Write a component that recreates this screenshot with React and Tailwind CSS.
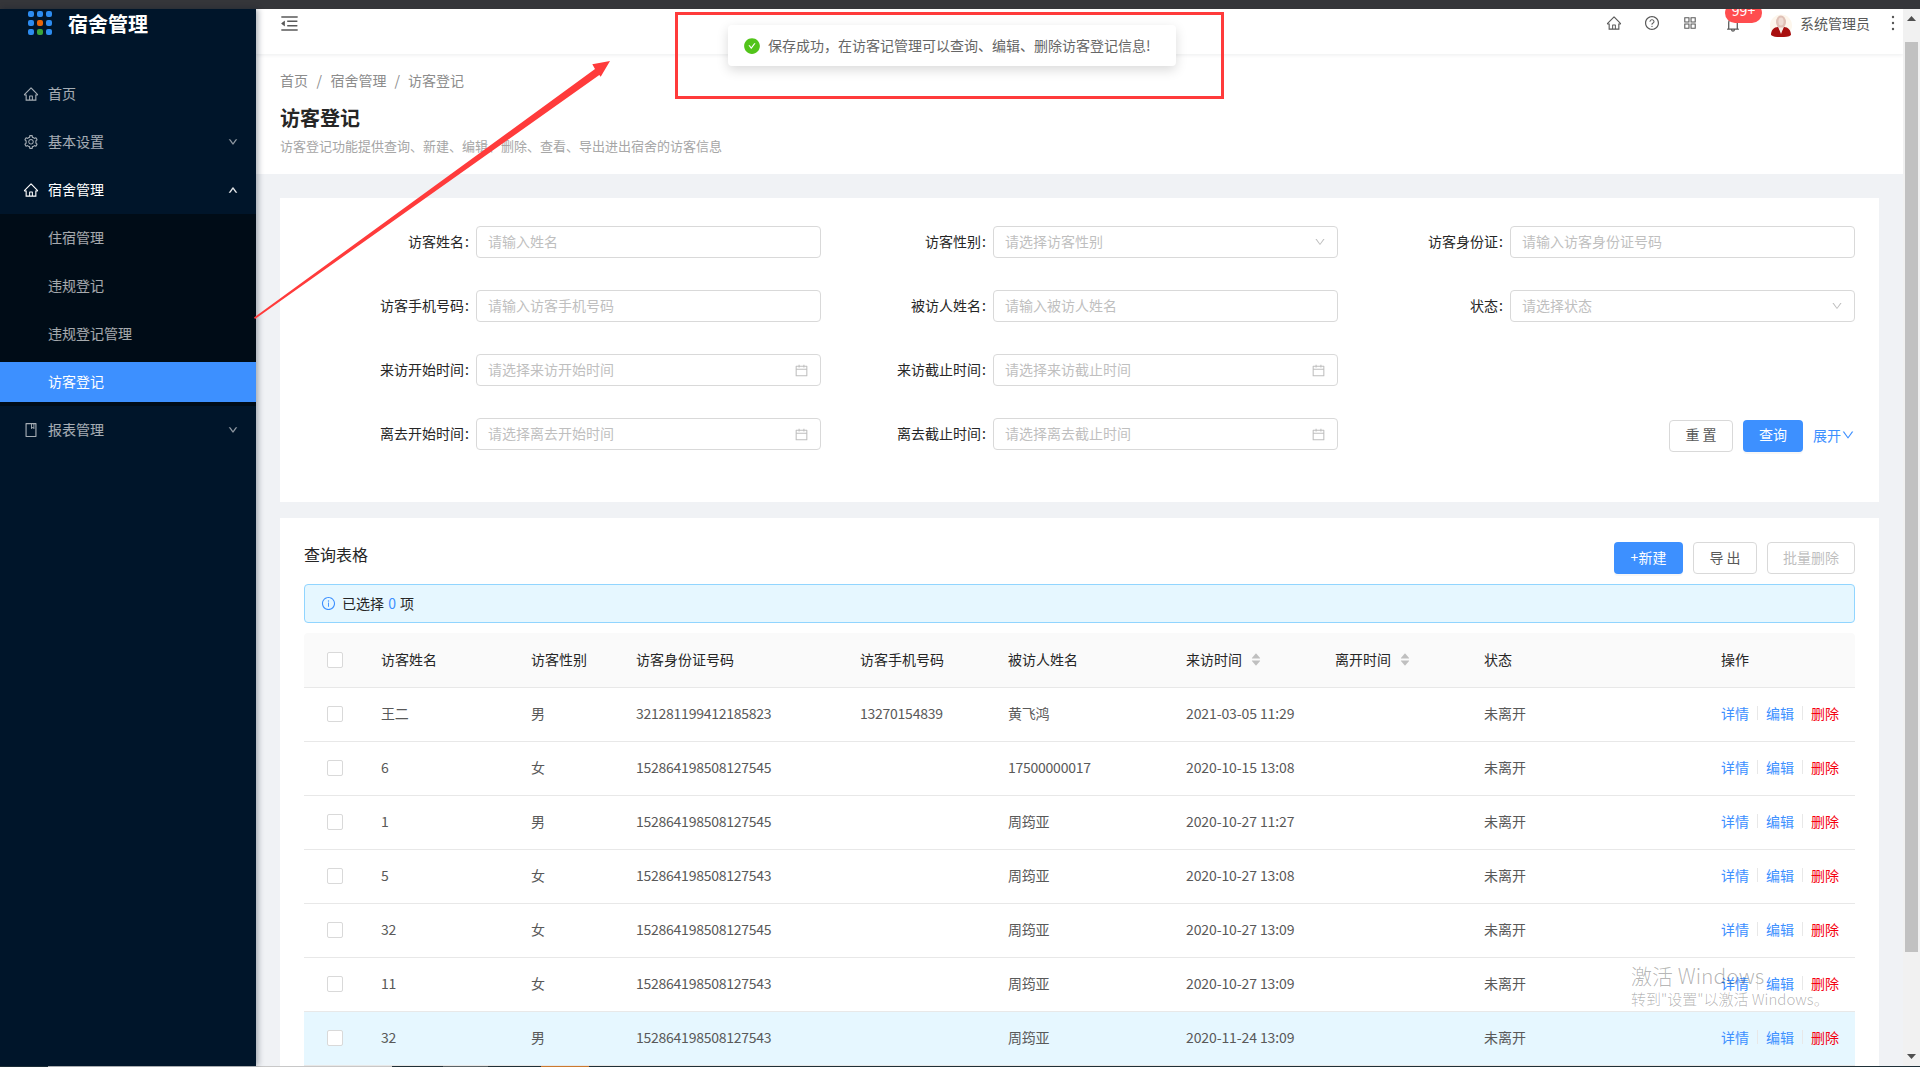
import React from 'react';
import {
  AiOutlineHome,
  AiOutlineSetting,
  AiOutlineBook,
  AiOutlineDown,
  AiOutlineUp,
  AiOutlineMenuFold,
  AiOutlineQuestionCircle,
  AiOutlineAppstore,
  AiOutlineBell,
  AiOutlineMore,
  AiOutlineCalendar,
  AiOutlineInfoCircle,
  AiFillCheckCircle,
  AiFillCaretUp,
  AiFillCaretDown,
} from 'react-icons/ai';

const rows = [
  { name: '王二', sex: '男', id: '321281199412185823', phone: '13270154839', host: '黄飞鸿', time: '2021-03-05 11:29' },
  { name: '6', sex: '女', id: '152864198508127545', phone: '', host: '17500000017', time: '2020-10-15 13:08' },
  { name: '1', sex: '男', id: '152864198508127545', phone: '', host: '周筠亚', time: '2020-10-27 11:27' },
  { name: '5', sex: '女', id: '152864198508127543', phone: '', host: '周筠亚', time: '2020-10-27 13:08' },
  { name: '32', sex: '女', id: '152864198508127545', phone: '', host: '周筠亚', time: '2020-10-27 13:09' },
  { name: '11', sex: '女', id: '152864198508127543', phone: '', host: '周筠亚', time: '2020-10-27 13:09' },
  { name: '32', sex: '男', id: '152864198508127543', phone: '', host: '周筠亚', time: '2020-11-24 13:09', active: true },
];

const NavItem = ({ icon: Icon, label, arrow, open, className = 'mb-2' }) => (
  <div className={`flex h-10 items-center pl-6 pr-[18px] text-sm ${open ? 'text-white' : 'text-white/65'} ${className}`}>
    <Icon size={16} className="mr-[9px] -ml-px" />
    <span className="flex-1 pb-[2px]">{label}</span>
    {arrow && (open
      ? <AiOutlineUp size={10} className="stroke-[60px] stroke-white" />
      : <AiOutlineDown size={10} className="stroke-[60px] stroke-white/50 text-white/50" />)}
  </div>
);

const SubItem = ({ label, active }) => (
  <div className={`flex h-10 items-center pb-[2px] pl-12 text-sm ${active ? 'bg-[#3d90ff] text-white' : 'text-white/65'}`}>
    {label}
  </div>
);

const Sidebar = () => (
  <aside className="z-10 flex w-64 shrink-0 flex-col bg-[#00152a] shadow-[2px_0_6px_rgba(0,21,41,0.35)]">
    <div className="flex h-[65px] items-start pl-7">
      <div className="mt-[2px] grid grid-cols-3 gap-[3px]">
        {['bg-[#2d8cf0]', 'bg-[#2d8cf0]', 'bg-[#2d8cf0]', 'bg-[#2d8cf0]', 'bg-[#e8650a]', 'bg-[#2d8cf0]', 'bg-[#2d8cf0]', 'bg-[#3aa53a]', 'bg-[#2d8cf0]'].map((c, i) => (
          <span key={i} className={`h-[6px] w-[6px] rounded-[2px] ${c}`} />
        ))}
      </div>
      <h1 className="ml-[16px] mt-px text-[20px] leading-7 font-bold text-white">宿舍管理</h1>
    </div>
    <NavItem icon={AiOutlineHome} label="首页" />
    <NavItem icon={AiOutlineSetting} label="基本设置" arrow />
    <NavItem icon={AiOutlineHome} label="宿舍管理" arrow open className="mb-1" />
    <div className="mb-1 flex flex-col gap-2 bg-[#000c17] py-1">
      <SubItem label="住宿管理" />
      <SubItem label="违规登记" />
      <SubItem label="违规登记管理" />
      <SubItem label="访客登记" active />
    </div>
    <NavItem icon={AiOutlineBook} label="报表管理" arrow />
  </aside>
);

const Avatar = () => (
  <svg width="22" height="23" viewBox="0 0 22 23">
    <circle cx="11" cy="11.5" r="11" fill="#fdf6ec" />
    <ellipse cx="11" cy="8" rx="5" ry="6.5" fill="#dfc0b6" />
    <ellipse cx="11" cy="7.5" rx="2.6" ry="4" fill="#efdcd4" />
    <path d="M1 21c0-5 3-8 7-8l3 5 3-5c4 0 7 3 7 8-2 2-6 2-10 2s-8 0-10-2z" fill="#a80f0f" />
    <path d="M8.5 13.5h5L11 20z" fill="#f7ece6" />
  </svg>
);

const Header = () => (
  <header className="relative z-[1] h-[45px] shrink-0 overflow-hidden bg-white shadow-[0_1px_4px_rgba(0,21,41,0.08)]">
    <div className="flex h-[28px] items-center pl-6 text-[#595959]">
      <AiOutlineMenuFold size={21} className="-ml-px" />
      <div className="ml-auto flex items-center">
        <AiOutlineHome size={16} />
        <AiOutlineQuestionCircle size={16} className="ml-[22px]" />
        <AiOutlineAppstore size={16} className="ml-[22px]" />
        <span className="relative ml-[26px] mt-[2px]">
          <AiOutlineBell size={18} />
          <span className="absolute -top-[12px] left-[1px] flex h-[20px] w-[37px] items-start justify-center rounded-full bg-[#ff4d4f] text-[14px] leading-[14px] text-white">99+</span>
        </span>
        <span className="ml-[28px] mt-[5px]"><Avatar /></span>
        <span className="ml-[8px] text-sm leading-[22px]">系统管理员</span>
        <AiOutlineMore size={22} className="ml-[12px] -mr-px" />
      </div>
    </div>
  </header>
);

const PageHeader = () => (
  <div className="h-[120px] shrink-0 bg-white pl-6 pt-4">
    <div className="flex -translate-y-px text-sm leading-[22px] text-[#8c8c8c]">
      <span>首页</span>
      <span className="mx-[8.5px]">/</span>
      <span>宿舍管理</span>
      <span className="mx-2">/</span>
      <span>访客登记</span>
    </div>
    <h2 className="mt-3 text-[20px] leading-7 font-bold text-[#262626]">访客登记</h2>
    <p className="mt-1 -translate-y-px text-[13px] leading-[22px] text-[#a6a6a6]">访客登记功能提供查询、新建、编辑、删除、查看、导出进出宿舍的访客信息</p>
  </div>
);

const Field = ({ label, placeholder, type }) => (
  <div className="flex h-8">
    <label className="flex h-8 w-[172px] shrink-0 items-center justify-end pb-[2px] pr-[7px] text-sm text-[#262626]">
      {label}<span className="ml-[1px]">:</span>
    </label>
    <div className="flex h-8 w-[345px] items-center rounded-[4px] border border-[#d9d9d9] bg-white pl-[11px] pr-[11px] text-sm text-[#bfbfbf]">
      <span className="flex-1 pb-[2px]">{placeholder}</span>
      {type === 'select' && <AiOutlineDown size={12} />}
      {type === 'date' && <AiOutlineCalendar size={15} />}
    </div>
  </div>
);

const Button = ({ children, primary, disabled, className = '' }) => (
  <button
    className={`h-8 rounded-[4px] pb-[2px] text-sm ${primary ? 'bg-[#3d90ff] text-white shadow-[0_2px_0_rgba(0,0,0,0.03)]' : 'border border-[#d9d9d9] bg-white'} ${disabled ? 'text-[#bfbfbf]' : primary ? '' : 'text-[#595959]'} ${className}`}
  >
    {children}
  </button>
);

const SearchForm = () => (
  <section className="h-[304px] bg-white px-6 pt-7">
    <div className="grid grid-cols-[517px_517px_517px] gap-y-8">
      <Field label="访客姓名" placeholder="请输入姓名" />
      <Field label="访客性别" placeholder="请选择访客性别" type="select" />
      <Field label="访客身份证" placeholder="请输入访客身份证号码" />
      <Field label="访客手机号码" placeholder="请输入访客手机号码" />
      <Field label="被访人姓名" placeholder="请输入被访人姓名" />
      <Field label="状态" placeholder="请选择状态" type="select" />
      <Field label="来访开始时间" placeholder="请选择来访开始时间" type="date" />
      <Field label="来访截止时间" placeholder="请选择来访截止时间" type="date" />
      <div />
      <Field label="离去开始时间" placeholder="请选择离去开始时间" type="date" />
      <Field label="离去截止时间" placeholder="请选择离去截止时间" type="date" />
      <div className="flex items-center justify-end">
        <Button className="mt-[2px] w-16 !pb-[4px]">重 置</Button>
        <Button primary className="mt-[2px] ml-[10px] w-[60px] !pb-[4px]">查询</Button>
        <span className="ml-[10px] flex items-center text-sm text-[#3d90ff]">
          展开<AiOutlineDown size={14} />
        </span>
      </div>
    </div>
  </section>
);

const Checkbox = () => <span className="block h-4 w-4 rounded-[2px] border border-[#d9d9d9] bg-white" />;

const Sorter = () => (
  <span className="ml-[8px] inline-flex flex-col pt-[2px] text-[#bfbfbf]">
    <AiFillCaretUp size={12} className="-mb-[5px]" />
    <AiFillCaretDown size={12} />
  </span>
);

const Th = ({ children, className = '' }) => (
  <th className={`border-b border-[#e8e8e8] bg-[#fafafa] px-4 pb-[2px] text-left text-sm font-normal text-[#262626] ${className}`}>{children}</th>
);

const Td = ({ children, tracking = '' }) => (
  <td className={`border-b border-[#e8e8e8] px-4 pb-[2px] text-sm text-[#595959] ${tracking}`}>{children}</td>
);

const DataTable = () => (
  <table className="w-[1551px] table-fixed">
    <thead>
      <tr className="h-[54px]">
        <Th className="w-[61px] rounded-tl-[4px] !pb-0 !pl-[23px] !pr-0"><Checkbox /></Th>
        <Th className="w-[150px]">访客姓名</Th>
        <Th className="w-[105px]">访客性别</Th>
        <Th className="w-[224px]">访客身份证号码</Th>
        <Th className="w-[148px]">访客手机号码</Th>
        <Th className="w-[178px]">被访人姓名</Th>
        <Th className="w-[149px]"><span className="flex items-center">来访时间<Sorter /></span></Th>
        <Th className="w-[149px]"><span className="flex items-center">离开时间<Sorter /></span></Th>
        <Th className="w-[237px]">状态</Th>
        <Th className="w-[150px] rounded-tr-[4px]">操作</Th>
      </tr>
    </thead>
    <tbody>
      {rows.map((r, i) => (
        <tr key={i} className={`h-[54px] ${r.active ? 'bg-[#e6f7ff]' : ''}`}>
          <td className="border-b border-[#e8e8e8] pl-[23px]"><Checkbox /></td>
          <Td tracking="tracking-[-0.25px]">{r.name}</Td>
          <Td>{r.sex}</Td>
          <Td tracking="tracking-[-0.25px]">{r.id}</Td>
          <Td tracking="tracking-[-0.25px]">{r.phone}</Td>
          <Td tracking="tracking-[-0.25px]">{r.host}</Td>
          <Td tracking="tracking-[-0.1px]">{r.time}</Td>
          <Td />
          <Td>未离开</Td>
          <td className="border-b border-[#e8e8e8] pb-[2px] pl-4 text-sm">
            <span className="flex items-center">
              <span className="text-[#3d90ff]">详情</span>
              <span className="mx-2 h-[14px] w-px bg-[#e8e8e8]" />
              <span className="text-[#3d90ff]">编辑</span>
              <span className="mx-2 h-[14px] w-px bg-[#e8e8e8]" />
              <span className="text-[#f5000f]">删除</span>
            </span>
          </td>
        </tr>
      ))}
    </tbody>
  </table>
);

const TableCard = () => (
  <section className="mt-4 bg-white px-6 pt-6">
    <div className="flex h-8 items-center">
      <h3 className="flex-1 pb-[9px] text-base text-[#262626]">查询表格</h3>
      <Button primary className="w-[69px]">+新建</Button>
      <Button className="ml-[10px] w-16">导 出</Button>
      <Button disabled className="ml-[10px] w-[88px]">批量删除</Button>
    </div>
    <div className="mt-[10px] flex h-[39px] items-center rounded-[4px] border border-[#91d5ff] bg-[#e6f7ff] pl-4 text-sm text-[#262626]">
      <AiOutlineInfoCircle size={15} className="text-[#3d90ff]" />
      <span className="ml-[6px] pb-[2px]">已选择 <span className="mx-[1px] text-[#3d90ff]">0</span> 项</span>
    </div>
    <div className="mt-[10px]">
      <DataTable />
    </div>
  </section>
);

const Scrollbar = () => (
  <div className="flex w-[17px] shrink-0 flex-col bg-[#f1f1f1]">
    <div className="flex h-[33px] justify-center pt-[7px]">
      <svg width="9" height="5" viewBox="0 0 9 5"><path d="M4.5 0L9 5H0z" fill="#505050" /></svg>
    </div>
    <div className="ml-[2px] h-[910px] w-[13px] bg-[#c1c1c1]" />
    <div className="flex flex-1 items-end justify-center pb-[7px]">
      <svg width="9" height="5" viewBox="0 0 9 5"><path d="M0 0h9L4.5 5z" fill="#505050" /></svg>
    </div>
  </div>
);

const Taskbar = () => (
  <div className="flex h-px shrink-0 bg-[#1f3038]">
    <div className="w-12" />
    <div className="w-[344px] bg-[#c8c8c8]" />
    <div className="w-[51px]" />
    <div className="w-[45px] bg-[#5a6468]" />
    <div className="w-[53px]" />
    <div className="w-12 bg-[#c97a30]" />
  </div>
);

// 截图上的标注: 红框和箭头
const Annotations = () => (
  <>
    <svg className="pointer-events-none absolute left-[250px] top-[55px] z-20 h-[270px] w-[365px]" viewBox="250 55 365 270">
      <polygon points="254,317.5 595,69 592.3,64.3 610,61 600.7,76.7 599.3,75 255,319" fill="#ff3b3b" />
    </svg>
    <div className="pointer-events-none absolute left-[675px] top-3 z-20 h-[87px] w-[549px] border-[3px] border-[#ff3b3b]" />
    <div className="absolute left-[728px] top-[25px] z-30 flex h-[41px] w-[448px] items-center rounded-[4px] bg-white pl-[15px] text-sm text-[#666] shadow-[0_4px_12px_rgba(0,0,0,0.15)]">
      <AiFillCheckCircle size={18} className="text-[#52c41a]" />
      <span className="ml-[7px] pb-[2px]">保存成功，在访客记管理可以查询、编辑、删除访客登记信息!</span>
    </div>
  </>
);

const Watermark = () => (
  <div className="pointer-events-none absolute left-[1631px] top-[960px] z-20 font-light text-black/30">
    <div className="text-[21px] leading-[30px]">激活 Windows</div>
    <div className="text-[15px] leading-[18px]">转到"设置"以激活 Windows。</div>
  </div>
);

const App = () => {
  return (
    <div className="relative flex h-[1067px] w-[1920px] flex-col overflow-hidden bg-[#f0f2f5] font-['Noto_Sans_CJK_SC','Liberation_Sans',sans-serif]">
      <div className="h-[9px] shrink-0 bg-[#35363a]" />
      <div className="flex min-h-0 flex-1">
        <Sidebar />
        <main className="flex min-w-0 flex-1 flex-col overflow-hidden">
          <Header />
          <PageHeader />
          <div className="px-6 pt-6">
            <SearchForm />
            <TableCard />
          </div>
        </main>
        <Scrollbar />
      </div>
      <Taskbar />
      <Annotations />
      <Watermark />
    </div>
  );
};

export default App;
